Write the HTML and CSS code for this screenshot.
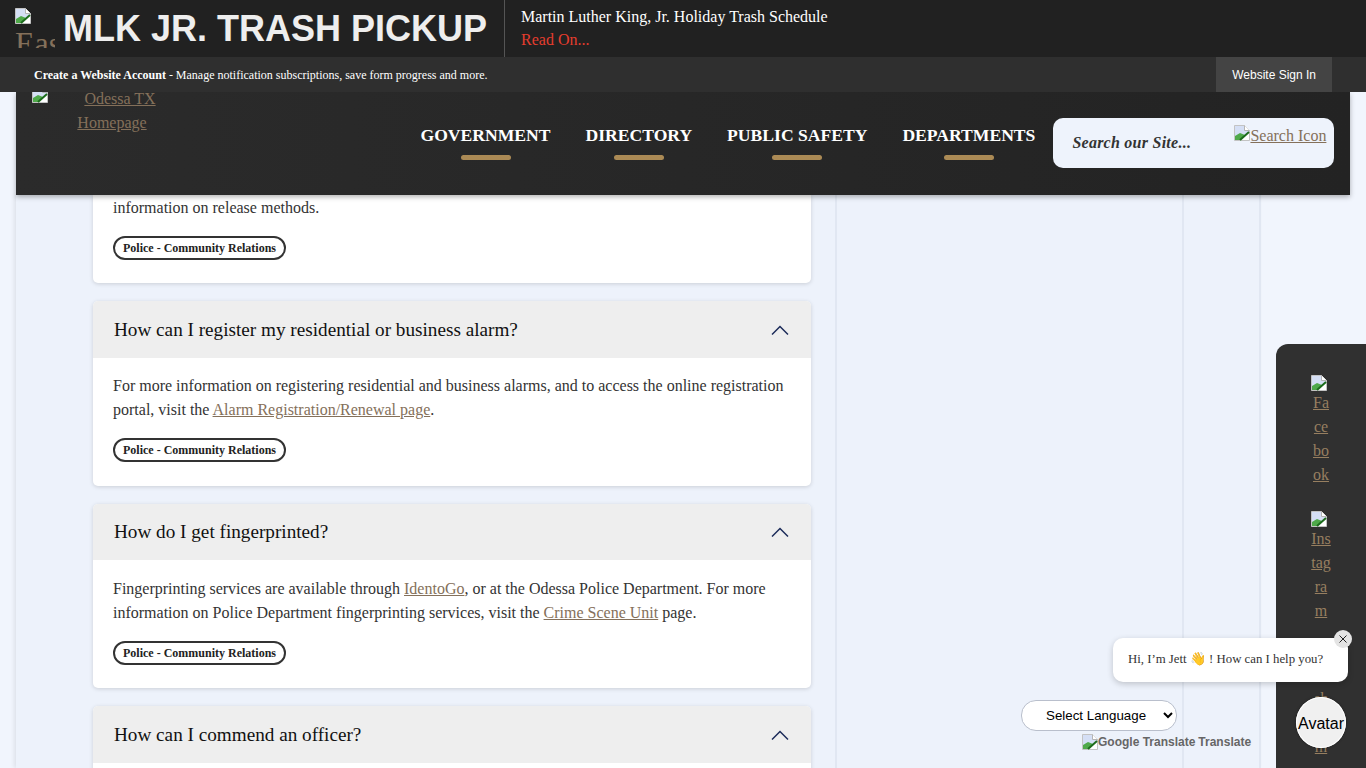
FILE: index.html
```html
<!DOCTYPE html>
<html>

<head>
    <title>Police FAQs - Odessa TX</title>
    <link rel="stylesheet" href="styles.css">
</head>

<body>
    <svg class="sprite" width="0" height="0">
        <symbol id="broken" viewBox="0 0 16 16">
            <path d="M0.500 0.500H10.500L15.500 5.500V15.500H0.500Z" fill="#d5dff5" stroke="#c3c3c3" />
            <path d="M10.500 0.500V5.500H15.500" fill="#fff" stroke="#b5b5b5" />
            <path d="M1 15V11L6 8L11 10L6 15Z" fill="#4fa94a" />
            <path d="M6 15L15 7V15Z" fill="#fff" />
            <path d="M6 15L15 7" stroke="#1c6b1c" stroke-width="2" />
        </symbol>
    </svg>

    <div class="alert-bar">
        <div class="alert-title">
            <svg class="broken-icon"><use href="#broken"></use></svg>
            <span class="alert-alt">Eas</span>
            <span class="alert-name">MLK JR. TRASH PICKUP</span>
        </div>
        <div class="alert-text">
            <div>Martin Luther King, Jr. Holiday Trash Schedule</div>
            <a class="alert-link" href="#">Read On...</a>
        </div>
    </div>

    <div class="account-bar">
        <p class="account-text"><b>Create a Website Account</b> - Manage notification subscriptions, save form progress and more.</p>
        <a class="sign-in" href="#">Website Sign In</a>
    </div>

    <div class="site-nav">
        <a class="logo" href="#">
            <svg class="broken-icon"><use href="#broken"></use></svg>
            <span class="logo-text">Odessa TX Homepage</span>
        </a>
        <nav class="menu">
            <a class="menu-item" href="#">GOVERNMENT</a>
            <a class="menu-item" href="#">DIRECTORY</a>
            <a class="menu-item" href="#">PUBLIC SAFETY</a>
            <a class="menu-item" href="#">DEPARTMENTS</a>
        </nav>
        <div class="search">
            <span class="search-text">Search our Site...</span>
            <a class="search-icon" href="#"><svg class="broken-icon"><use href="#broken"></use></svg>Search Icon</a>
        </div>
    </div>

    <div class="page">
        <div class="main-col">
            <div class="card card-first">
                <div class="card-body">
                    <p class="answer">information on release methods.</p>
                    <span class="tag">Police - Community Relations</span>
                </div>
            </div>

            <div class="card">
                <div class="card-head">
                    <h3 class="question">How can I register my residential or business alarm?</h3>
                    <svg class="chevron" viewBox="0 0 18 10"><path d="M1 9.500L9 1.500L17 9.500" /></svg>
                </div>
                <div class="card-body">
                    <p class="answer">For more information on registering residential and business alarms, and to access the online registration portal, visit the <a href="#">Alarm Registration/Renewal page</a>.</p>
                    <span class="tag">Police - Community Relations</span>
                </div>
            </div>

            <div class="card">
                <div class="card-head">
                    <h3 class="question">How do I get fingerprinted?</h3>
                    <svg class="chevron" viewBox="0 0 18 10"><path d="M1 9.500L9 1.500L17 9.500" /></svg>
                </div>
                <div class="card-body">
                    <p class="answer">Fingerprinting services are available through <a href="#">IdentoGo</a>, or at the Odessa Police Department. For more information on Police Department fingerprinting services, visit the <a href="#">Crime Scene Unit</a> page.</p>
                    <span class="tag">Police - Community Relations</span>
                </div>
            </div>

            <div class="card">
                <div class="card-head">
                    <h3 class="question">How can I commend an officer?</h3>
                    <svg class="chevron" viewBox="0 0 18 10"><path d="M1 9.500L9 1.500L17 9.500" /></svg>
                </div>
                <div class="card-body"></div>
            </div>
        </div>
        <div class="side-col"></div>
    </div>

    <div class="social">
        <a class="social-item" href="#"><svg class="broken-icon"><use href="#broken"></use></svg><span>Facebook</span></a>
        <a class="social-item" href="#"><svg class="broken-icon"><use href="#broken"></use></svg><span>Instagram</span></a>
        <a class="social-item" href="#"><svg class="broken-icon"><use href="#broken"></use></svg><span>Webcam</span></a>
    </div>

    <div class="translate">
        <select class="language">
            <option>Select Language</option>
        </select>
        <div class="translate-credit"><svg class="broken-icon"><use href="#broken"></use></svg>Google Translate <span class="translate-word">Translate</span></div>
    </div>

    <div class="chat-bubble">
        Hi, I’m Jett <span class="wave">👋</span> ! How can I help you?
        <span class="chat-close">
            <svg viewBox="0 0 10 10"><path d="M1.500 1.500L8.500 8.500M8.500 1.500L1.500 8.500" /></svg>
        </span>
    </div>
    <div class="avatar">Avatar</div>
</body>

</html>
```

FILE: styles.css
```css
html,
body {
    height: 768px;
    overflow: hidden;
}

body {
    margin: 0;
    background-color: #f1f5fd;
    font-family: "Liberation Serif", "Times New Roman", serif;
    font-size: 16px;
    color: #222;
}

a {
    color: #84705a;
}

.sprite {
    position: absolute;
}

.broken-icon {
    width: 16px;
    height: 16px;
    flex: none;
}

.alert-bar {
    height: 57px;
    display: flex;
    background-color: #212121;
    color: #fff;
}

.alert-title {
    width: 505px;
    height: 57px;
    box-sizing: border-box;
    padding-left: 15px;
    display: flex;
    overflow: hidden;
    border-right: 1px solid #555;
    position: relative;
}

.alert-title .broken-icon {
    margin-top: 8px;
}

.alert-alt {
    position: absolute;
    left: 15px;
    top: 25px;
    width: 40px;
    height: 23px;
    overflow: hidden;
    font-size: 32px;
    line-height: 36px;
    color: #84705a;
}

.alert-name {
    margin-left: 32px;
    margin-top: 7px;
    font-family: "Liberation Sans", Arial, sans-serif;
    font-size: 36px;
    line-height: 44px;
    font-weight: bold;
    color: #eee;
    white-space: nowrap;
}

.alert-text {
    padding: 5px 0 0 16px;
    line-height: 23px;
    font-size: 16px;
}

.alert-link {
    color: #e63d2e;
    text-decoration: none;
}

.account-bar {
    height: 35px;
    display: flex;
    align-items: center;
    justify-content: space-between;
    padding: 0 34px;
    background-color: #2f2f2f;
    color: #fff;
    font-size: 12px;
    position: relative;
    z-index: 2;
}

.account-text {
    margin: 2px 0 0;
}

.sign-in {
    height: 35px;
    line-height: 37px;
    padding: 0 16px;
    background-color: #444;
    color: #fff;
    text-decoration: none;
    font-family: "Liberation Sans", Arial, sans-serif;
}

.site-nav {
    height: 103px;
    margin: 0 16px;
    display: flex;
    background: linear-gradient(to right, #2b2b2b, #232323);
    box-shadow: 0 2px 5px rgba(0, 0, 0, 0.3);
    position: relative;
    z-index: 1;
}

.logo {
    width: 160px;
    margin: -5px 0 0 16px;
    height: 60px;
    line-height: 24px;
    text-align: center;
    display: block;
}

.logo .broken-icon {
    float: left;
}

.logo-text {
    display: block;
    width: 100px;
    margin-left: 30px;
    text-indent: 16px;
}

.menu {
    margin-left: 228.500px;
    display: flex;
    gap: 35px;
    padding-top: 31px;
}

.menu-item {
    color: #fff;
    font-weight: bold;
    font-size: 17.600px;
    text-decoration: none;
    display: flex;
    flex-direction: column;
    align-items: center;
    line-height: 24px;
}

.menu-item::after {
    content: "";
    width: 50px;
    height: 5px;
    margin-top: 8px;
    border-radius: 3px;
    background-color: #ab8a55;
}

.search {
    width: 281px;
    height: 50px;
    margin: 26px 0 0 18px;
    box-sizing: border-box;
    padding: 0 8px 0 19px;
    display: flex;
    justify-content: space-between;
    background-color: #eef3fc;
    border-radius: 10px;
}

.search-text {
    font-style: italic;
    font-weight: bold;
    line-height: 50px;
    letter-spacing: 0.250px;
    color: #333;
}

.search-icon {
    margin-top: 6px;
    line-height: 24px;
}

.page {
    margin-left: 16px;
    width: 1245px;
    height: 573px;
    box-sizing: border-box;
    display: flex;
    overflow: hidden;
    background-color: #edf2fb;
    border-right: 2px solid #e1e7f2;
    box-shadow: -2px 0 4px rgba(0, 0, 0, 0.08);
}

.main-col {
    width: 821px;
    box-sizing: border-box;
    padding-left: 77px;
    border-right: 2px solid #e1e7f2;
}

.side-col {
    width: 347px;
    box-sizing: border-box;
    border-right: 2px solid #e1e7f2;
}

.card {
    width: 718px;
    margin-bottom: 18px;
    background-color: #fff;
    border-radius: 5px;
    box-shadow: 0 1px 4px rgba(0, 0, 0, 0.15);
    overflow: hidden;
}

.card-first {
    border-radius: 0 0 5px 5px;
}

.card-first .card-body {
    padding-top: 0.500px;
}

.card-head {
    height: 56.500px;
    box-sizing: border-box;
    padding: 1px 22px 0 21px;
    display: flex;
    align-items: center;
    justify-content: space-between;
    background-color: #eee;
}

.question {
    margin: 0;
    font-size: 19.200px;
    font-weight: normal;
    color: #111;
}

.chevron {
    width: 18px;
    height: 10px;
}

.chevron path {
    fill: none;
    stroke: #1d2c5a;
    stroke-width: 1.500;
}

.card-body {
    padding: 16.500px 20px 23.500px;
}

.answer {
    margin: 0 0 16px;
    line-height: 24px;
    color: #333;
}

.tag {
    display: inline-block;
    padding: 0 8px;
    border: 2px solid #333;
    border-radius: 12px;
    font-size: 12px;
    font-weight: bold;
    line-height: 20px;
    color: #222;
}

.social {
    position: absolute;
    left: 1276px;
    top: 344px;
    width: 90px;
    height: 424px;
    box-sizing: border-box;
    padding: 31px 0 0 35px;
    overflow: hidden;
    background-color: #303030;
    border-top-left-radius: 12px;
}

.social-item {
    display: block;
    width: 20px;
    line-height: 24px;
    text-align: center;
    word-break: break-all;
    margin-bottom: 24px;
    color: #977f60;
}

.social-item .broken-icon {
    display: block;
}

.translate {
    position: absolute;
    left: 1021px;
    top: 700px;
    width: 230px;
}

.language {
    width: 156px;
    height: 31px;
    padding-left: 20px;
    background-color: #fff;
    border: 1px solid #b9bfcc;
    border-radius: 15px;
    font-family: "Liberation Sans", Arial, sans-serif;
    font-size: 13.330px;
    color: #000;
}

.translate-credit {
    display: flex;
    align-items: center;
    margin: 3px 0 0 61px;
    font-family: "Liberation Sans", Arial, sans-serif;
    font-size: 12px;
    font-weight: bold;
    color: #666;
    white-space: nowrap;
}

.translate-word {
    margin-left: 3px;
}

.chat-bubble {
    position: absolute;
    left: 1113px;
    top: 638px;
    width: 235px;
    height: 44px;
    box-sizing: border-box;
    padding-left: 15px;
    line-height: 42px;
    font-size: 12.800px;
    color: #333;
    background-color: #fff;
    border-radius: 10px;
    box-shadow: 0 2px 6px rgba(0, 0, 0, 0.2);
}

.wave {
    font-size: 13px;
}

.chat-close {
    position: absolute;
    right: -4px;
    top: -8px;
    width: 18px;
    height: 18px;
    display: flex;
    align-items: center;
    justify-content: center;
    border-radius: 50%;
    background-color: #e4e4e4;
}

.chat-close svg {
    width: 10px;
    height: 10px;
}

.chat-close path {
    stroke: #222;
    stroke-width: 1;
}

.avatar {
    position: absolute;
    left: 1296px;
    top: 697px;
    width: 50px;
    height: 51px;
    line-height: 54px;
    text-align: center;
    border-radius: 50%;
    background-color: #f0f0f0;
    box-shadow: inset 0 0 0 1px #fff, 0 0 3px rgba(0, 0, 0, 0.4);
    font-family: "Liberation Sans", Arial, sans-serif;
    font-size: 16px;
    color: #000;
    white-space: nowrap;
}
```
